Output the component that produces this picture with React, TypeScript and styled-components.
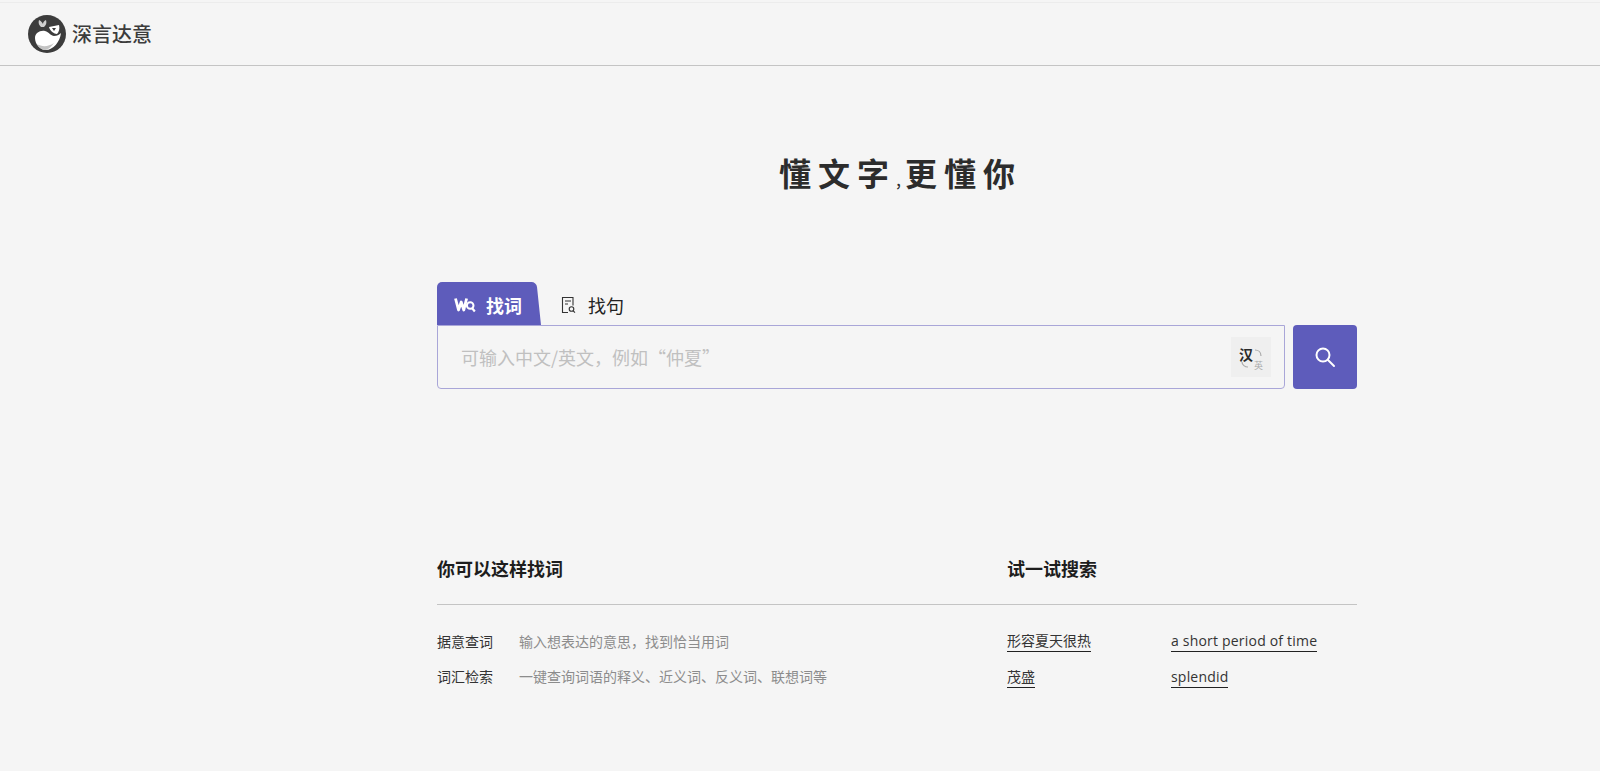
import styled, { createGlobalStyle } from 'styled-components';

const GlobalStyle = createGlobalStyle`
  html, body {
    margin: 0;
    padding: 0;
    background: #f5f5f5;
    font-family: "Noto Sans CJK SC", "Liberation Sans", sans-serif;
  }
  * { box-sizing: border-box; }
`;

const Page = styled.div`
  height: 771px;
  overflow: hidden;
  background: #f5f5f5;
`;
const Header = styled.header`
  height: 64px;
  margin-top: 2px;
  padding-left: 28px;
  display: flex;
  align-items: center;
  gap: 6px;
  border-top: 1px solid #ececec;
  border-bottom: 1px solid #c4c4c4;
`;
const LogoText = styled.div`
  font-size: 20px;
  color: #3c3c3c;
  font-weight: 500;
  line-height: 1;
`;
const Main = styled.main`
  width: 920px;
  margin-left: 437px;
`;
const Slogan = styled.h1`
  margin: 84px 0 0;
  padding-left: 7px;
  text-align: center;
  font-size: 32px;
  line-height: 44px;
  font-weight: 700;
  letter-spacing: 7px;
  color: #2c2c2c;
`;
const SloganComma = styled.span`
  font-size: 18px;
  line-height: 1;
  font-weight: 400;
  letter-spacing: 4px;
`;
const Tabs = styled.div`
  display: flex;
  align-items: flex-end;
  margin-top: 88px;
  height: 43px;
`;
const ActiveTab = styled.div`
  position: relative;
  width: 104px;
  height: 43px;
  padding: 2px 0 0 17px;
  display: flex;
  align-items: center;
  color: #fff;
  font-size: 18px;
  font-weight: 700;
  background: linear-gradient(to right, #5e5cbb 90px, transparent 90px);
  border-radius: 5px 0 0 0;

  &::after {
    content: '';
    position: absolute;
    top: 0;
    right: 0;
    bottom: 0;
    width: 24px;
    background: #5e5cbb;
    border-radius: 0 5px 0 0;
    transform: skewX(6deg);
    transform-origin: bottom right;
  }
`;
const TabLabel = styled.span`
  position: relative;
  z-index: 1;
  display: flex;
  align-items: center;
  gap: 10px;
`;
const PlainTab = styled.div`
  height: 43px;
  margin-left: 20px;
  padding-top: 2px;
  display: flex;
  align-items: center;
  gap: 12px;
  font-size: 18px;
  color: #222;
`;
const SearchRow = styled.div`
  display: flex;
  gap: 8px;
`;
const InputBox = styled.div`
  flex: 1;
  height: 64px;
  padding: 0 13px 0 23px;
  display: flex;
  align-items: center;
  justify-content: space-between;
  border: 1px solid #a9a6d8;
  border-radius: 0 0 4px 4px;
`;
const Placeholder = styled.div`
  font-size: 18px;
  line-height: 26px;
  padding-bottom: 1px;
  color: #c0c0c0;
`;
const LangToggle = styled.div`
  position: relative;
  width: 40px;
  height: 40px;
  background: #efefef;
`;
const LangMain = styled.span`
  position: absolute;
  left: 8px;
  top: 9px;
  font-size: 14px;
  line-height: 16px;
  font-weight: 700;
  color: #2a2a2a;
`;
const LangSub = styled.span`
  position: absolute;
  left: 23px;
  top: 24px;
  font-size: 9px;
  line-height: 10px;
  color: #aaa;
`;
const LangArcs = styled.svg`
  position: absolute;
  left: 0;
  top: 0;
`;
const SearchButton = styled.button`
  width: 64px;
  height: 64px;
  padding: 0;
  border: 0;
  border-radius: 4px;
  background: #5e5cbb;
  display: flex;
  align-items: center;
  justify-content: center;
`;
const Columns = styled.div`
  display: grid;
  grid-template-columns: 570px 1fr;
  margin-top: 166px;
`;
const ColumnTitle = styled.h2`
  margin: 0;
  height: 50px;
  font-size: 18px;
  line-height: 26px;
  font-weight: 700;
  color: #1d1d1d;
  border-bottom: 1px solid #c4c4c4;
`;
const Usage = styled.div`
  display: grid;
  grid-template-columns: 82px 1fr;
  margin-top: 26px;
  row-gap: 14px;
  font-size: 14px;
  line-height: 21px;
`;
const UsageName = styled.div`
  color: #333;
`;
const UsageDesc = styled.div`
  color: #8c8c8c;
`;
const Tries = styled.div`
  display: grid;
  grid-template-columns: 164px 1fr;
  margin-top: 25px;
  row-gap: 14px;
  justify-items: start;
`;
const TryLink = styled.a<{ $latin?: boolean }>`
  font-family: "Open Sans", "Noto Sans CJK SC", sans-serif;
  font-size: 14px;
  line-height: 21px;
  letter-spacing: ${(p) => (p.$latin ? '0.2px' : '0')};
  color: #333;
  border-bottom: 1px solid #222;
`;

const Logo = () => (
  <svg width="38" height="38" viewBox="0 0 38 38">
    <circle cx="19" cy="19" r="19" fill="#3c3c3c" />
    <path d="M13 12c-2-2-3-4-2-7 2 1 3 2 4 4 0-2 1-3 3-4 1 3 0 5-2 7z" fill="#cfcfcf" />
    <path d="M7 23c0-5 5-8 10-7 4 1 6 5 9 5 3 0 5-1 7-3-1 9-8 17-15 17-6 0-11-6-11-12z" fill="#fff" />
    <path d="M21 12l10-2c1 3 0 7-2 9-3 0-7-3-8-7z" fill="#fff" />
    <path d="M24 13l4 0-2 3z" fill="#3c3c3c" />
    <path d="M9 29c5 3 11 3 17-1-3 4-6 7-9 7-3 0-6-2-8-6z" fill="#c4c4c4" />
  </svg>
);

const WordIcon = () => (
  <svg width="22" height="16" viewBox="0 0 22 16" fill="none" stroke="#fff">
    <path d="M1.5 1.5l3 11.5 2.7-8 2.6 8 2.8-11.5" strokeWidth="2.8" strokeLinejoin="round" />
    <circle cx="16.2" cy="8.5" r="3.3" strokeWidth="2" />
    <path d="M18 11l2.8 3.5" strokeWidth="2.2" />
  </svg>
);

const SentenceIcon = () => (
  <svg width="15" height="18" viewBox="0 0 15 18" fill="none" stroke="#333" strokeWidth="1.1">
    <path d="M7 16.5H1.5V1.5h10.5v8" />
    <path d="M4 5h6M4 8h3" />
    <circle cx="10.5" cy="13" r="2.3" />
    <path d="M12.2 14.8l1.8 1.9" />
  </svg>
);

const SearchIcon = () => (
  <svg width="22" height="22" viewBox="0 0 22 22" fill="none" stroke="#fff" strokeWidth="2">
    <circle cx="9" cy="9" r="6.5" />
    <path d="M14 14l6 6" strokeLinecap="round" />
  </svg>
);

export default function App() {
  return (
    <Page>
      <GlobalStyle />
      <Header>
        <Logo />
        <LogoText>深言达意</LogoText>
      </Header>
      <Main>
        <Slogan>
          懂文字<SloganComma>,</SloganComma>更懂你
        </Slogan>
        <Tabs>
          <ActiveTab>
            <TabLabel>
              <WordIcon />
              找词
            </TabLabel>
          </ActiveTab>
          <PlainTab>
            <SentenceIcon />
            找句
          </PlainTab>
        </Tabs>
        <SearchRow>
          <InputBox>
            <Placeholder>{'可输入中文/英文\uFF0C例如“仲夏”'}</Placeholder>
            <LangToggle>
              <LangMain>汉</LangMain>
              <LangSub>英</LangSub>
              <LangArcs width="40" height="40" viewBox="0 0 40 40" fill="none" stroke="#aaa" strokeWidth="1.2">
                <path d="M24 13c3 0 6 2 6 6" />
                <path d="M11 25c0 3 3 5 6 5" />
              </LangArcs>
            </LangToggle>
          </InputBox>
          <SearchButton aria-label="搜索">
            <SearchIcon />
          </SearchButton>
        </SearchRow>
        <Columns>
          <div>
            <ColumnTitle>你可以这样找词</ColumnTitle>
            <Usage>
              <UsageName>据意查词</UsageName>
              <UsageDesc>{'输入想表达的意思\uFF0C找到恰当用词'}</UsageDesc>
              <UsageName>词汇检索</UsageName>
              <UsageDesc>一键查询词语的释义、近义词、反义词、联想词等</UsageDesc>
            </Usage>
          </div>
          <div>
            <ColumnTitle>试一试搜索</ColumnTitle>
            <Tries>
              <TryLink>形容夏天很热</TryLink>
              <TryLink $latin>a short period of time</TryLink>
              <TryLink>茂盛</TryLink>
              <TryLink $latin>splendid</TryLink>
            </Tries>
          </div>
        </Columns>
      </Main>
    </Page>
  );
}
